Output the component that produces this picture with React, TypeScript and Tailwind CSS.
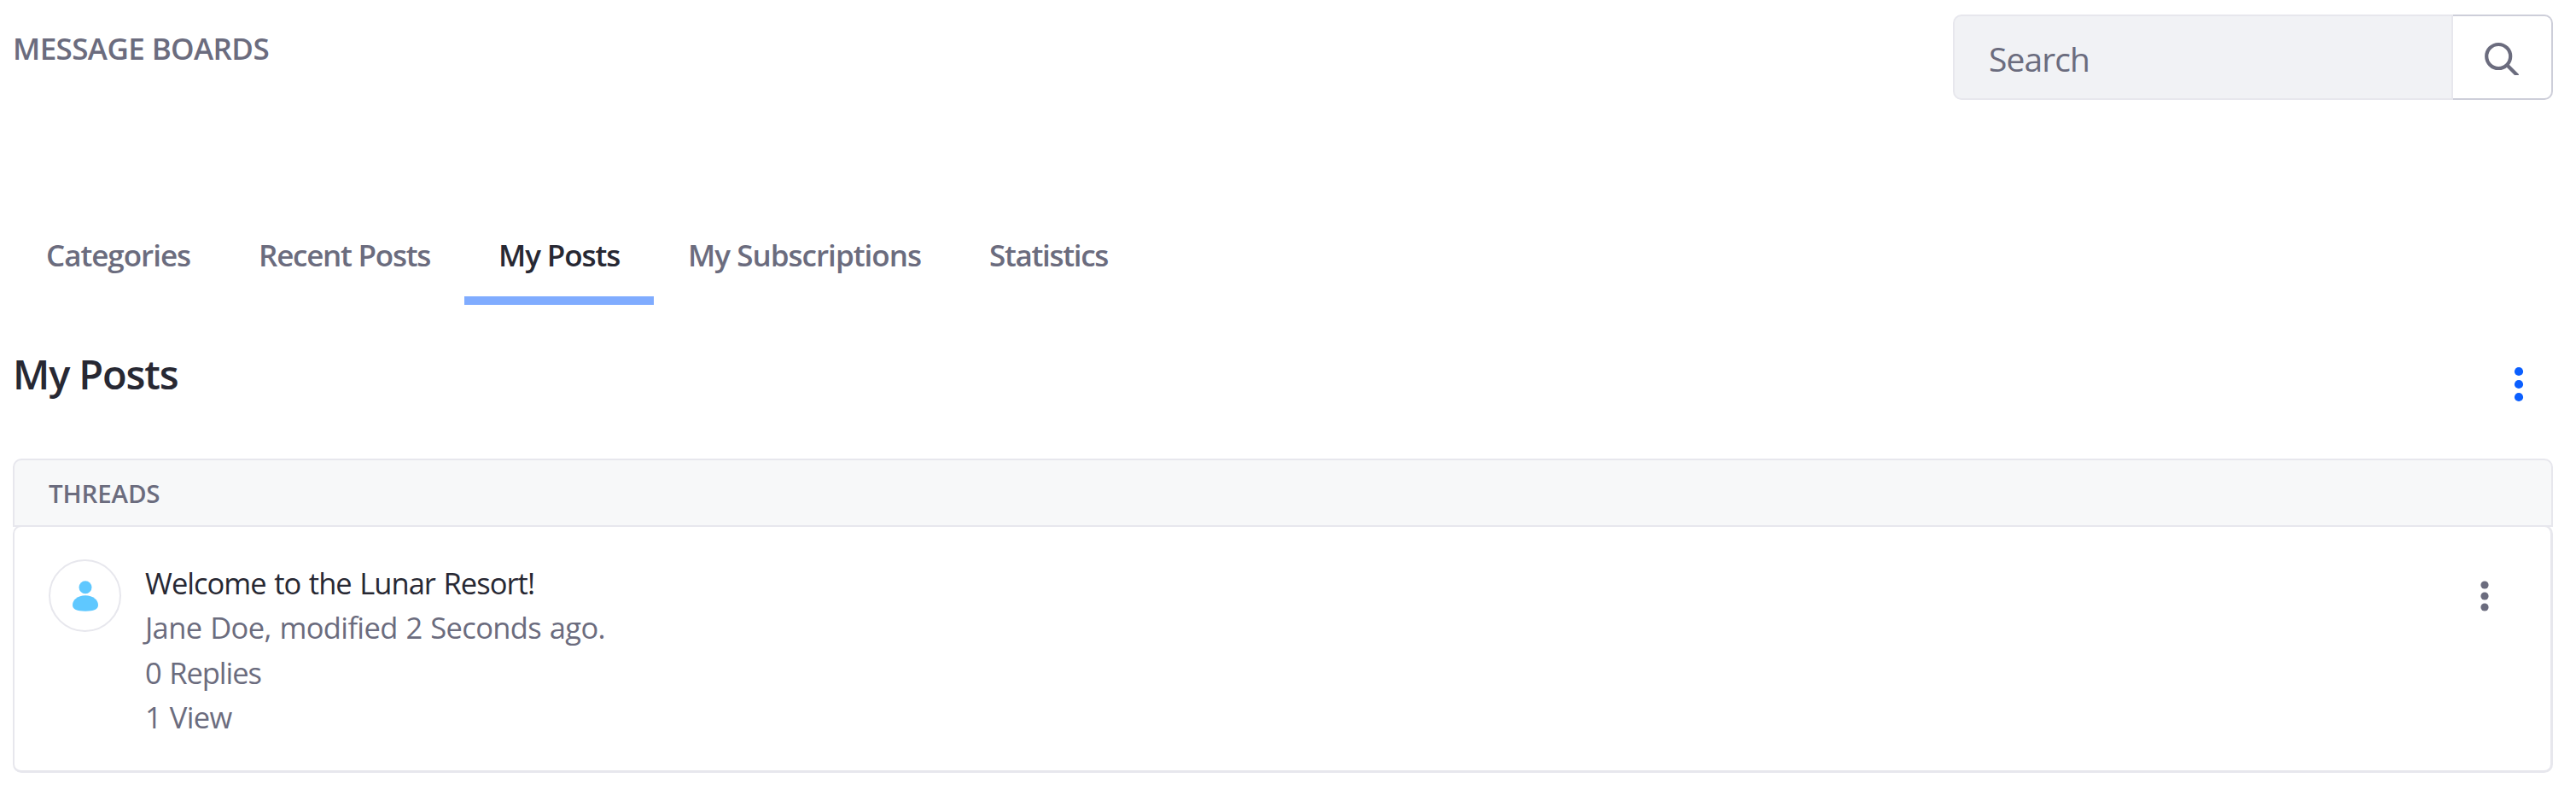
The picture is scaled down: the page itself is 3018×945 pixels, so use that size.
const tabs = [
  { label: "Categories", spacing: "tracking-[-1.03px]" },
  { label: "Recent Posts", spacing: "tracking-[-1.25px]" },
  { label: "My Posts", spacing: "tracking-[-1.11px]", active: true },
  { label: "My Subscriptions", spacing: "tracking-[-0.98px]" },
  { label: "Statistics", spacing: "tracking-[-1.3px]" },
];

function Dots({ className, r, gap }: { className: string; r: number; gap: number }) {
  return (
    <svg className={className} viewBox="0 0 12 44" fill="currentColor">
      <circle cx="6" cy={22 - gap} r={r} />
      <circle cx="6" cy="22" r={r} />
      <circle cx="6" cy={22 + gap} r={r} />
    </svg>
  );
}

function Header() {
  return (
    <header className="flex h-[100px] items-start justify-between">
      <h1 className="mt-[14px] text-[35px] leading-[52px] font-semibold tracking-[-0.6px] uppercase">
        Message Boards
      </h1>
      <div className="flex h-full w-[703px]">
        <div className="flex flex-1 items-center rounded-l-[10px] border-2 border-[#e7e7ed] bg-[#f1f2f5] pt-[5px] pl-10 text-[39px] tracking-[-0.9px]">
          Search
        </div>
        <button
          type="button"
          aria-label="Search"
          className="flex w-[117px] items-center rounded-r-[10px] border-2 border-l-0 border-[#cdced9] bg-white pl-9"
        >
          <svg className="h-[42px] w-[42px]" viewBox="0 0 42 42" fill="none" stroke="currentColor" strokeWidth="4.2">
            <circle cx="17.2" cy="20" r="14" />
            <path d="M27.5 30.5 L38.8 41.8" strokeLinecap="round" />
          </svg>
        </button>
      </div>
    </header>
  );
}

function Tabs() {
  return (
    <nav className="mt-[120px] -ml-px flex h-[120px] text-[35px] leading-[52px] font-semibold">
      {tabs.map((tab) => (
        <a
          key={tab.label}
          className={`border-b-[10px] px-10 pt-9 whitespace-nowrap ${tab.spacing} ${
            tab.active ? "border-[#80acff] text-[#272833]" : "border-transparent"
          }`}
        >
          {tab.label}
        </a>
      ))}
    </nav>
  );
}

function Threads() {
  return (
    <section className="mt-12 flex flex-col">
      <div className="flex h-20 items-center rounded-t-[10px] border-2 border-[#e7e7ed] bg-[#f7f8f9] pt-0.5 pl-10 text-[29.5px] font-semibold tracking-[-0.15px] uppercase">
        Threads
      </div>
      <div className="-mt-0.5 flex h-[290px] rounded-[10px] border-2 border-r-[3px] border-b-[3px] border-[#e7e7ed] pt-[38px] pr-[71px] pl-10">
        <div className="flex h-[85px] w-[85px] items-center justify-center rounded-full border-2 border-[#e7e7ed] text-[#5fc8ff]">
          <svg className="h-9 w-[30px]" viewBox="0 0 30 36" fill="currentColor">
            <circle cx="15" cy="7.7" r="7.5" />
            <path d="M15 17.2 C24 17.2 30 22.5 30 28.5 C30 33.3 25 35.7 15 35.7 C5 35.7 0 33.3 0 28.5 C0 22.5 6 17.2 15 17.2Z" />
          </svg>
        </div>
        <div className="mt-0.5 ml-7 flex-1 text-[34.5px] leading-[52.4px] [word-spacing:1.5px]">
          <p className="tracking-[-0.97px] text-[#272833]">Welcome to the Lunar Resort!</p>
          <p className="tracking-[-0.65px]">Jane Doe, modified 2 Seconds ago.</p>
          <p className="tracking-[-1.02px]">0 Replies</p>
          <p className="tracking-[-0.68px]">1 View</p>
        </div>
        <Dots className="mt-[20.5px] h-11 w-3" r={4.6} gap={13} />
      </div>
    </section>
  );
}

export default function App() {
  return (
    <div className="h-[945px] w-[3018px] bg-white pt-[17px] pr-[27px] pl-[15px] font-['Open_Sans',sans-serif] text-[#6b6c7e]">
      <Header />
      <Tabs />
      <div className="mt-[50px] flex h-[82px] items-start justify-between pr-[34px]">
        <h2 className="mt-px text-[47px] leading-[60px] font-semibold tracking-[-1.15px] text-[#272833]">
          My Posts
        </h2>
        <Dots className="mt-[21px] h-11 w-3 text-[#0b5fff]" r={5.1} gap={15} />
      </div>
      <Threads />
    </div>
  );
}
